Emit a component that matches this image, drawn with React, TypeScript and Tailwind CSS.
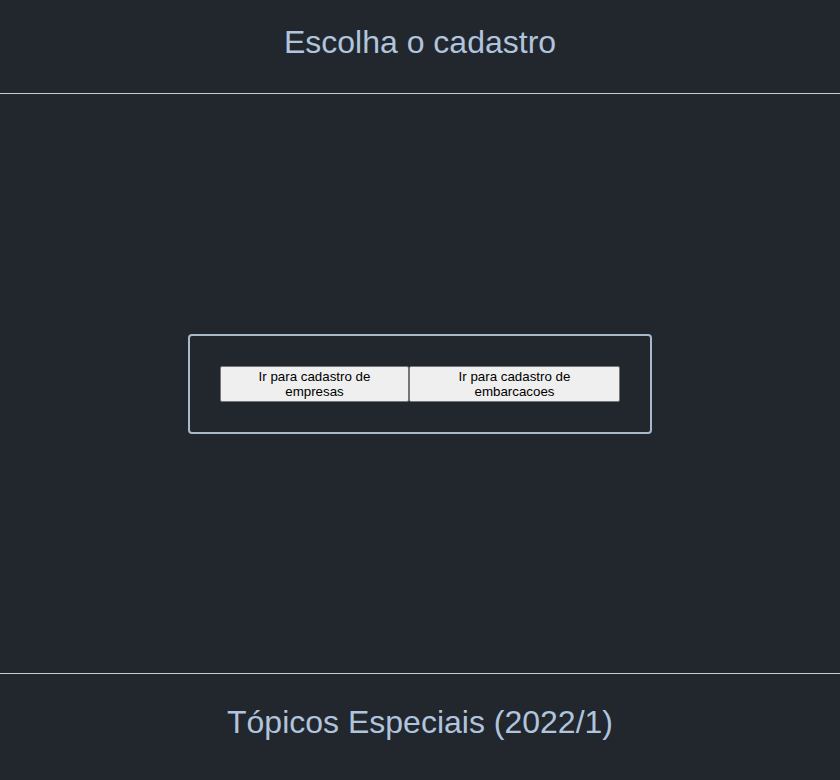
import React from "react";

export default function App() {
  return (
    <div
      className="flex h-[780px] w-full flex-col bg-[#22262d] text-[#b0c4de]"
      style={{ fontFamily: '"Liberation Sans", Arial, sans-serif' }}
    >
      <header className="h-[94px] shrink-0 border-b border-[#c4ccd6] pt-[24px] text-center">
        <h1 className="text-[32px] leading-[37px] font-normal">Escolha o cadastro</h1>
      </header>
      <main className="flex flex-1 items-center justify-center">
        <div className="rounded-[4px] border-2 border-[#a9b9cc] p-[30px]">
          <div className="flex">
            <button className="flex h-[36px] w-[189px] items-center justify-center rounded-[2px] border border-[#767676] bg-[#efefef] px-[6px] text-center text-[13.33px] leading-[15px] text-black">
              Ir para cadastro de
              <br />
              empresas
            </button>
            <button className="flex h-[36px] w-[211px] items-center justify-center rounded-[2px] border border-[#767676] bg-[#efefef] px-[6px] text-center text-[13.33px] leading-[15px] text-black">
              Ir para cadastro de
              <br />
              embarcacoes
            </button>
          </div>
        </div>
      </main>
      <footer className="h-[107px] shrink-0 border-t border-[#c4ccd6] pt-[30px] text-center">
        <p className="text-[32px] leading-[37px]">Tópicos Especiais (2022/1)</p>
      </footer>
    </div>
  );
}
